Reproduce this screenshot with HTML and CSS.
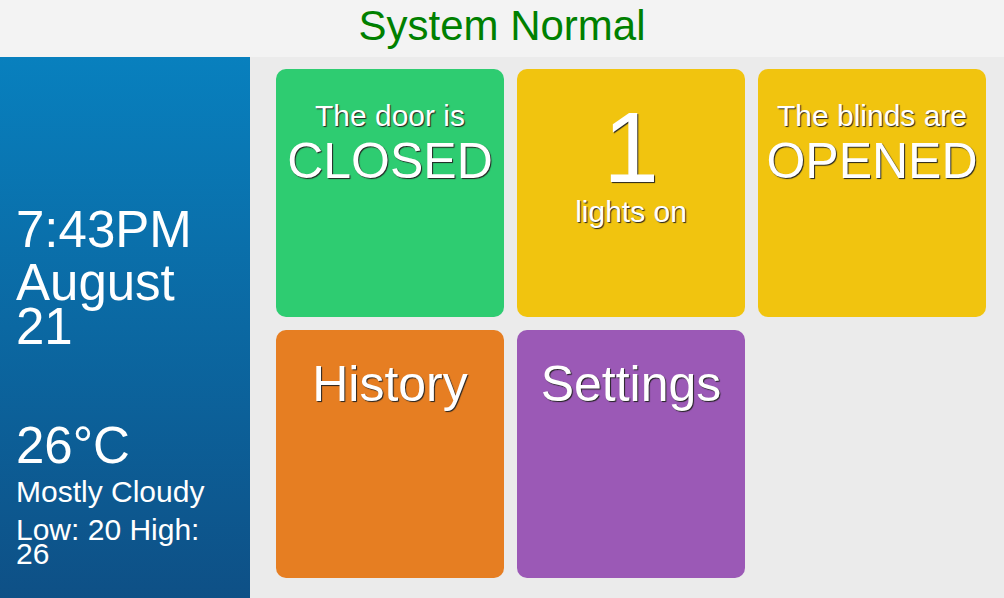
FILE: index.html
```html
<!DOCTYPE html>
<html>
<head>
<meta charset="utf-8">
<title>Home Dashboard</title>
<link rel="stylesheet" href="styles.css">
</head>
<body>
<header class="status-bar">System Normal</header>
<div class="layout">
  <aside class="sidebar">
    <div class="time">7:43PM</div>
    <div class="date">August 21</div>
    <div class="temp">26°C</div>
    <div class="cond">Mostly Cloudy</div>
    <div class="range">Low: 20 High: 26</div>
  </aside>
  <main class="tiles">
    <div class="tile green">
      <div class="small">The door is</div>
      <div class="big">CLOSED</div>
    </div>
    <div class="tile yellow">
      <div class="count">1</div>
      <div class="small">lights on</div>
    </div>
    <div class="tile yellow">
      <div class="small">The blinds are</div>
      <div class="big">OPENED</div>
    </div>
    <div class="tile orange">
      <div class="title">History</div>
    </div>
    <div class="tile purple">
      <div class="title">Settings</div>
    </div>
  </main>
</div>
</body>
</html>
```
FILE: styles.css
```css
html, body {
  margin: 0;
  padding: 0;
  width: 1004px;
  height: 598px;
  overflow: hidden;
  font-family: "Liberation Sans", Arial, sans-serif;
}
.status-bar {
  height: 57px;
  box-sizing: border-box;
  padding-top: 3px;
  background: #f3f3f3;
  color: #008000;
  font-size: 42px;
  line-height: 46px;
  text-align: center;
}
.layout {
  display: flex;
  height: 541px;
}
.sidebar {
  width: 250px;
  flex: none;
  box-sizing: border-box;
  padding: 148px 16px 0 16px;
  background: linear-gradient(to bottom, #0880be 0%, #0e5086 100%);
  color: #fff;
}
.time {
  font-size: 51px;
  line-height: 50px;
}
.date {
  font-size: 51px;
  line-height: 44px;
  margin-top: 6px;
}
.temp {
  font-size: 51px;
  line-height: 50px;
  margin-top: 72px;
}
.cond {
  font-size: 30px;
  line-height: 30px;
  margin-top: 6px;
}
.range {
  font-size: 30px;
  line-height: 24px;
  margin-top: 11px;
}
.tiles {
  flex: 1;
  background: #ebebeb;
  padding: 12px 0 0 26px;
  display: grid;
  grid-template-columns: repeat(3, 228px);
  grid-template-rows: repeat(2, 248px);
  gap: 13px;
  align-content: start;
}
.tile {
  border-radius: 10px;
  color: #fff;
  text-align: center;
  padding-top: 30px;
  box-sizing: border-box;
  text-shadow: 1px 1px 1px #222;
}
.green { background: #2ecc71; }
.yellow { background: #f1c40f; }
.orange { background: #e67e22; }
.purple { background: #9b59b6; }
.small {
  font-size: 30px;
  line-height: 34px;
}
.big {
  font-size: 50px;
  line-height: 57px;
}
.count {
  font-size: 100px;
  line-height: 96px;
}
.title {
  font-size: 50px;
  line-height: 48px;
}
```
